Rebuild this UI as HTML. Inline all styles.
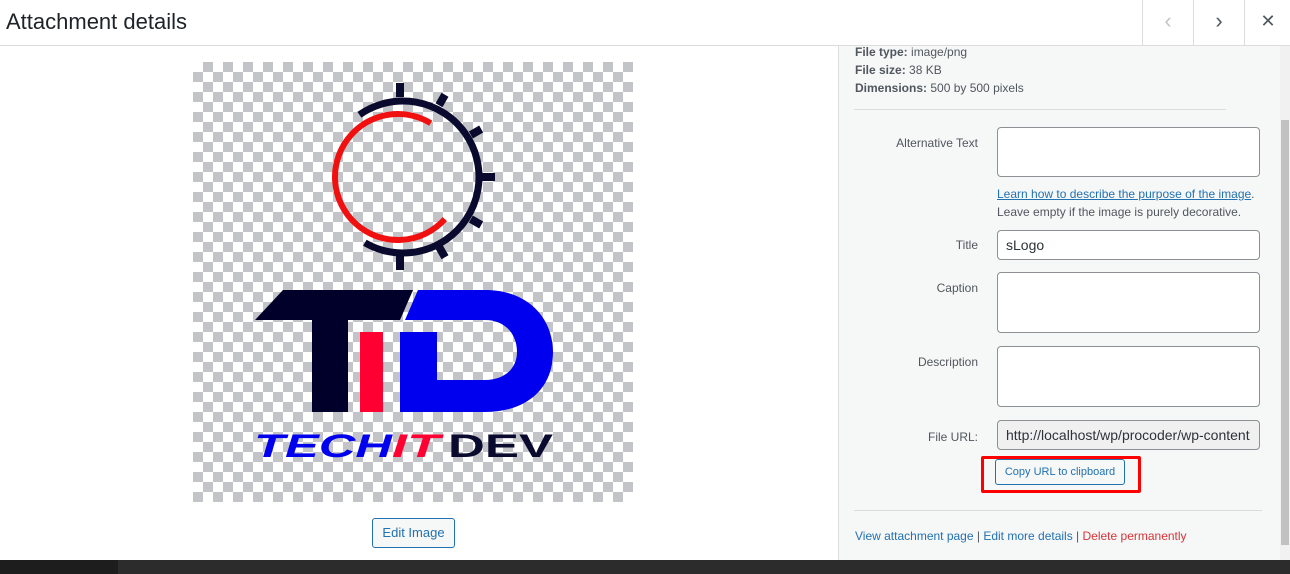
<!DOCTYPE html>
<html><head><style>
body{margin:0;width:1290px;height:574px;overflow:hidden;background:#1d1d1d;font-family:"Liberation Sans",sans-serif;position:relative}
.modal{position:absolute;left:0;top:0;width:1290px;height:560px;background:#fff}
.hdr{position:absolute;left:0;top:0;width:1290px;height:45px;border-bottom:1px solid #dcdcde;background:#fff}
.hdr h1{margin:0;position:absolute;left:6px;top:9px;font-size:22px;font-weight:400;color:#1d2327}
.btn{position:absolute;top:0;width:50px;height:45px;border-left:1px solid #dcdcde;text-align:center;line-height:42px;font-size:22px;color:#50575e}
.side{position:absolute;left:838px;top:46px;width:442px;height:514px;background:#f6f7f7;border-left:1px solid #dcdcde;font-size:12px;color:#50575e}
.lab{position:absolute;right:303px;text-align:right;font-size:12px;color:#50575e}
.inp{position:absolute;left:158px;width:263px;border:1px solid #8c8f94;border-radius:4px;background:#fff;box-sizing:border-box;font-size:14px;color:#2c3338;padding:6px 8px;white-space:nowrap;overflow:hidden}
a{color:#2271b1}
.check{position:absolute;left:193px;top:62px;width:440px;height:440px;background-color:#fff;background-image:linear-gradient(45deg,#c3c4c7 25%,transparent 25%,transparent 75%,#c3c4c7 75%),linear-gradient(45deg,#c3c4c7 25%,transparent 25%,transparent 75%,#c3c4c7 75%);background-size:20px 20px;background-position:0 0,10px 10px}
</style></head><body>
<div class="modal">
<div class="hdr"><h1>Attachment details</h1>
<div class="btn" style="left:1142px;color:#c3c4c7">&#8249;</div>
<div class="btn" style="left:1193px">&#8250;</div>
<div class="btn" style="left:1244px;width:46px;font-size:18px">&#10005;</div>
</div>
<div class="check"></div>
<svg style="position:absolute;left:0;top:0" width="838" height="560">
<g fill="#0a0a2e">
<circle cx="403" cy="177" r="76" fill="none" stroke="#0a0a2e" stroke-width="7" stroke-dasharray="325 200" transform="rotate(-125 403 177)"/>
<rect x="396" y="83" width="8" height="14"/><rect x="396" y="256" width="8" height="14"/>
<rect x="481" y="173" width="14" height="8"/>
<rect x="438" y="94" width="8" height="12" transform="rotate(30 442 100)"/>
<rect x="470" y="128" width="12" height="8" transform="rotate(-30 476 132)"/>
<rect x="470" y="218" width="12" height="8" transform="rotate(30 476 222)"/>
<rect x="438" y="246" width="8" height="12" transform="rotate(-30 442 252)"/>
</g>
<circle cx="398" cy="177" r="63" fill="none" stroke="#f01010" stroke-width="6" stroke-dasharray="285 200" transform="rotate(42 398 177)"/>
<polygon points="283,290 413,290 400,320 255,320" fill="#00002a"/>
<rect x="312" y="318" width="36" height="94" fill="#00002a"/>
<rect x="360" y="332" width="23" height="80" fill="#ff0033"/>
<path d="M418,290 L485,290 C530,290 553,320 553,352 C553,390 525,412 485,412 L400,412 L400,332 L437,332 L437,380 L485,380 C505,380 517,368 517,352 C517,334 505,320 485,320 L405,320 Z" fill="#0000ee"/>
<text x="254" y="457" font-family="Liberation Sans" font-weight="bold" font-size="32" fill="#0000ee" textLength="138" lengthAdjust="spacingAndGlyphs" font-style="italic">TECH</text>
<text x="392" y="457" font-family="Liberation Sans" font-weight="bold" font-size="32" fill="#ff0033" textLength="48" lengthAdjust="spacingAndGlyphs" font-style="italic">IT</text>
<text x="448" y="457" font-family="Liberation Sans" font-weight="bold" font-size="32" fill="#0a0a2e" textLength="105" lengthAdjust="spacingAndGlyphs">DEV</text>
</svg>
<div style="position:absolute;left:372px;top:518px;width:81px;height:28px;border:1px solid #2271b1;border-radius:3px;background:#f6f7f7;color:#2271b1;font-size:13px;text-align:center;line-height:28px">Edit Image</div>
<div class="side">
<div style="position:absolute;left:16px;top:-3px;line-height:18px"><b>File type:</b> image/png<br><b>File size:</b> 38 KB<br><b>Dimensions:</b> 500 by 500 pixels</div>
<div style="position:absolute;left:15px;top:63px;width:372px;border-top:1px solid #dcdcde"></div>
<div class="lab" style="top:90px">Alternative Text</div>
<div class="inp" style="top:81px;height:50px"></div>
<div style="position:absolute;left:158px;top:139px;font-size:12px;line-height:18px"><a href="#">Learn how to describe the purpose of the image</a>.<br>Leave empty if the image is purely decorative.</div>
<div class="lab" style="top:192px">Title</div>
<div class="inp" style="top:184px;height:30px">sLogo</div>
<div class="lab" style="top:235px">Caption</div>
<div class="inp" style="top:226px;height:61px"></div>
<div class="lab" style="top:309px">Description</div>
<div class="inp" style="top:300px;height:61px"></div>
<div class="lab" style="top:384px">File URL:</div>
<div class="inp" style="top:374px;height:30px;background:#f0f0f1;border-color:#8c8f94">http://localhost/wp/procoder/wp-content</div>
<div style="position:absolute;left:142px;top:410px;width:160px;height:37px;border:3px solid #f00;box-sizing:border-box;border-radius:2px"></div>
<div style="position:absolute;left:156px;top:413px;width:128px;height:24px;border:1px solid #2271b1;border-radius:3px;background:#f6f7f7;color:#2271b1;font-size:11px;text-align:center;line-height:24px">Copy URL to clipboard</div>
<div style="position:absolute;left:15px;top:464px;width:408px;border-top:1px solid #dcdcde"></div>
<div style="position:absolute;left:16px;top:483px;font-size:12px"><a href="#" style="text-decoration:none">View attachment page</a> | <a href="#" style="text-decoration:none">Edit more details</a> | <span style="color:#d63638">Delete permanently</span></div>
</div>
<div style="position:absolute;left:1280px;top:46px;width:10px;height:514px;background:#f1f1f1"></div>
<div style="position:absolute;left:1281px;top:120px;width:8px;height:425px;background:#c1c1c1"></div>
</div>
<div style="position:absolute;left:118px;top:560px;width:1172px;height:14px;background:#2c2c2c"></div>
</body></html>
